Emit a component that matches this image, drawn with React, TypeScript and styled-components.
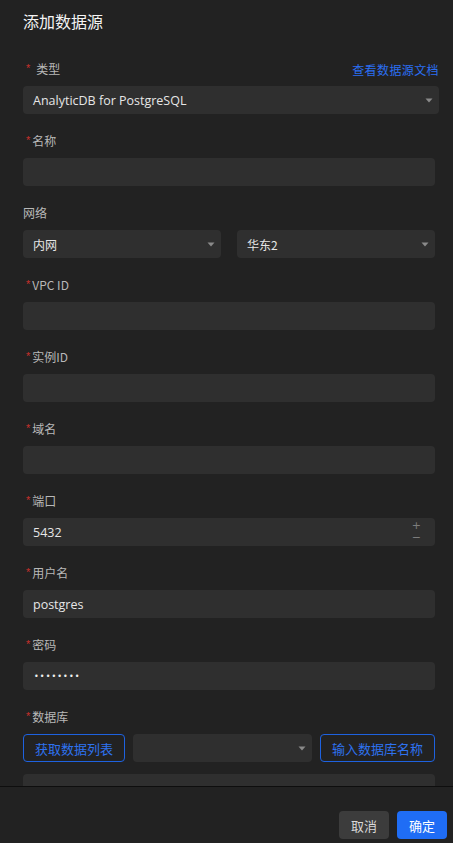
import styled, { createGlobalStyle } from 'styled-components';

const GlobalStyle = createGlobalStyle`
  html, body {
    margin: 0;
    padding: 0;
    background: #222222;
  }
  body {
    font-family: "Open Sans", "Noto Sans CJK SC", sans-serif;
    color: #e0e0e0;
  }
`;

const CN = `"Noto Sans CJK SC", "Open Sans", sans-serif`;

type FieldDef = {
  label: string;
  required?: boolean;
  value?: string;
  kind?: 'input' | 'number' | 'password';
};

const fields: FieldDef[] = [
  { label: 'VPC ID', required: true },
  { label: '实例ID', required: true },
  { label: '域名', required: true },
  { label: '端口', required: true, value: '5432', kind: 'number' },
  { label: '用户名', required: true, value: 'postgres' },
  { label: '密码', required: true, value: '••••••••', kind: 'password' },
];

const Caret = () => (
  <CaretIcon viewBox="0 0 8 5" width="8" height="5">
    <path d="M0.5 0.5 L7.5 0.5 L4 4.5 Z" fill="#8a8a8a" />
  </CaretIcon>
);

const App: React.FC = () => {
  return (
    <>
      <GlobalStyle />
      <Dialog>
        <Header>
          <Title>添加数据源</Title>
        </Header>
        <Body>
          <Field>
            <LabelRow $wide>
              <Label>
                <Star>*</Star>
                <Gap />
                类型
              </Label>
              <DocLink>查看数据源文档</DocLink>
            </LabelRow>
            <Select $wide>
              <ControlText>AnalyticDB for PostgreSQL</ControlText>
              <Caret />
            </Select>
          </Field>

          <Field>
            <LabelRow>
              <Label>
                <Star>*</Star>名称
              </Label>
            </LabelRow>
            <Input />
          </Field>

          <Field>
            <LabelRow>
              <Label>网络</Label>
            </LabelRow>
            <Pair>
              <Select>
                <ControlText $cn>内网</ControlText>
                <Caret />
              </Select>
              <Select>
                <ControlText $cn>华东2</ControlText>
                <Caret />
              </Select>
            </Pair>
          </Field>

          {fields.map((f) => (
            <Field key={f.label}>
              <LabelRow>
                <Label>
                  {f.required && <Star>*</Star>}
                  {f.label}
                </Label>
              </LabelRow>
              <Input>
                {f.kind === 'password' ? (
                  <Dots>{f.value}</Dots>
                ) : (
                  f.value && <ControlText>{f.value}</ControlText>
                )}
                {f.kind === 'number' && (
                  <Stepper>
                    <span>+</span>
                    <span>−</span>
                  </Stepper>
                )}
              </Input>
            </Field>
          ))}

          <Field $tight>
            <LabelRow>
              <Label>
                <Star>*</Star>数据库
              </Label>
            </LabelRow>
            <DbRow>
              <OutlineButton>获取数据列表</OutlineButton>
              <Select>
                <span />
                <Caret />
              </Select>
              <OutlineButton>输入数据库名称</OutlineButton>
            </DbRow>
          </Field>
          <Field>
            <Input />
          </Field>
        </Body>
        <Footer>
          <FooterButton>取消</FooterButton>
          <FooterButton $primary>确定</FooterButton>
        </Footer>
      </Dialog>
    </>
  );
};

const Dialog = styled.div`
  width: 453px;
  height: 843px;
  display: flex;
  flex-direction: column;
  background: #222222;
  overflow: hidden;
`;

const Header = styled.div`
  height: 42px;
  padding: 0 23px;
  display: flex;
  align-items: center;
  flex-shrink: 0;
`;

const Title = styled.h1`
  margin: 0;
  font-family: ${CN};
  font-size: 16px;
  font-weight: 400;
  color: #f4f4f4;
`;

const Body = styled.div`
  flex: 1;
  overflow: hidden;
  padding: 18px 18px 0 23px;
`;

const Field = styled.div<{ $tight?: boolean }>`
  margin-bottom: ${(p) => (p.$tight ? '12px' : '18px')};
`;

const LabelRow = styled.div<{ $wide?: boolean }>`
  height: 18px;
  margin-bottom: 8px;
  width: ${(p) => (p.$wide ? '416px' : '412px')};
  display: flex;
  align-items: center;
  justify-content: space-between;
`;

const Label = styled.div`
  font-family: ${CN};
  font-size: 12px;
  line-height: 18px;
  color: #b8b8b8;
  display: flex;
  align-items: center;
`;

const Star = styled.span`
  color: #c8302b;
  font-size: 11px;
  line-height: 1;
  align-self: flex-start;
  margin: 3px 2px 0 3px;
  font-family: "Liberation Sans", sans-serif;
`;

const Gap = styled.span`
  width: 4px;
`;

const DocLink = styled.a`
  font-family: ${CN};
  font-size: 12px;
  letter-spacing: 0.4px;
  color: #2b6ff2;
  cursor: pointer;
`;

const Control = styled.div`
  height: 28px;
  box-sizing: border-box;
  background: #2f2f2f;
  border-radius: 4px;
  padding: 0 10px;
  display: flex;
  align-items: center;
  justify-content: space-between;
  position: relative;
`;

const Input = styled(Control)`
  width: 412px;
`;

const Select = styled(Control)<{ $wide?: boolean }>`
  width: ${(p) => (p.$wide ? '416px' : 'auto')};
  padding-right: 6px;
`;

const ControlText = styled.span<{ $cn?: boolean }>`
  font-family: ${(p) => (p.$cn ? CN : `"Open Sans", "Noto Sans CJK SC", sans-serif`)};
  font-size: ${(p) => (p.$cn ? '12px' : '12.5px')};
  color: #e6e6e6;
`;

const Dots = styled.span`
  font-family: "DejaVu Sans", sans-serif;
  font-size: 8px;
  letter-spacing: 1.1px;
  color: #f0f0f0;
  padding-left: 1px;
`;

const CaretIcon = styled.svg`
  display: block;
  flex-shrink: 0;
`;

const Stepper = styled.div`
  display: flex;
  flex-direction: column;
  align-items: center;
  color: #7d7d7d;
  font-family: "DejaVu Sans", sans-serif;
  font-size: 11px;
  line-height: 12px;
  margin-right: 4px;
`;

const Pair = styled.div`
  width: 412px;
  display: grid;
  grid-template-columns: 1fr 1fr;
  gap: 16px;
`;

const DbRow = styled.div`
  width: 412px;
  display: grid;
  grid-template-columns: 102px 1fr 115px;
  gap: 8px;
`;

const OutlineButton = styled.button`
  height: 28px;
  box-sizing: border-box;
  border: 1px solid #1e62e0;
  border-radius: 4px;
  background: transparent;
  color: #2e72f0;
  font-family: ${CN};
  font-size: 13px;
  padding: 0;
  cursor: pointer;
`;

const Footer = styled.div`
  height: 57px;
  flex-shrink: 0;
  border-top: 1px solid #0e0e0e;
  background: #222222;
  display: flex;
  justify-content: flex-end;
  align-items: flex-start;
  gap: 8px;
  padding: 24px 6px 0 0;
  box-sizing: border-box;
`;

const FooterButton = styled.button<{ $primary?: boolean }>`
  width: 50px;
  height: 28px;
  border: none;
  border-radius: 4px;
  background: ${(p) => (p.$primary ? '#1f6df5' : '#3c3c3c')};
  color: ${(p) => (p.$primary ? '#ffffff' : '#d8d8d8')};
  font-family: ${CN};
  font-size: 13px;
  padding: 0;
  cursor: pointer;
`;

export default App;
